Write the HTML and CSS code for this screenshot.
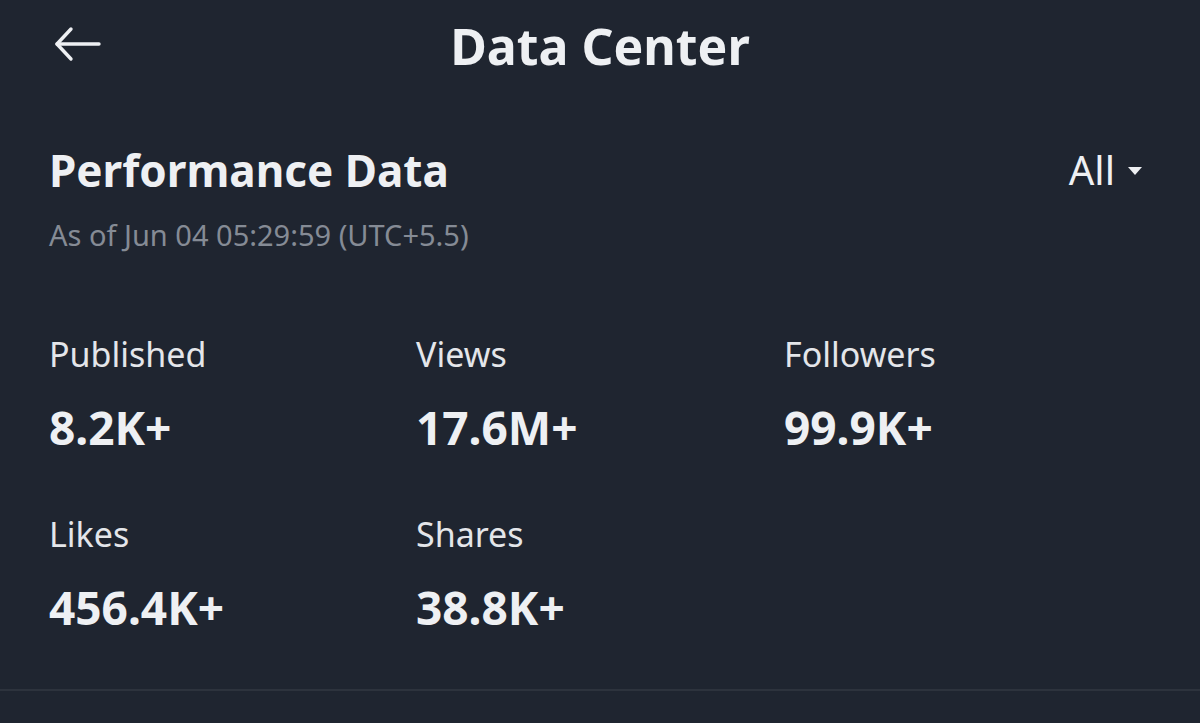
FILE: index.html
```html
<!DOCTYPE html>
<html lang="en">
<head>
<meta charset="utf-8">
<title>Data Center</title>
<link rel="stylesheet" href="styles.css">
</head>
<body>
<header class="topbar">
  <button class="back" aria-label="Back">
    <svg width="48" height="36" viewBox="0 0 48 36" fill="none" stroke="#eef0f3" stroke-width="3.4" stroke-linecap="round" stroke-linejoin="round">
      <path d="M45 18H3"/>
      <path d="M17 3L3 18L17 33"/>
    </svg>
  </button>
  <h1 class="title">Data Center</h1>
</header>
<section class="perf">
  <div class="perf-head">
    <div>
      <h2 class="perf-title">Performance Data</h2>
      <p class="asof">As of Jun 04 05:29:59 (UTC+5.5)</p>
    </div>
    <button class="filter">All<span class="caret"></span></button>
  </div>
  <div class="stats">
    <div class="stat"><div class="label">Published</div><div class="value">8.2K+</div></div>
    <div class="stat"><div class="label">Views</div><div class="value">17.6M+</div></div>
    <div class="stat"><div class="label">Followers</div><div class="value">99.9K+</div></div>
    <div class="stat"><div class="label">Likes</div><div class="value">456.4K+</div></div>
    <div class="stat"><div class="label">Shares</div><div class="value">38.8K+</div></div>
  </div>
</section>
<div class="divider"></div>
</body>
</html>
```
FILE: styles.css
```css
html, body {
  margin: 0;
  padding: 0;
  background: #1f2530;
  color: #eef0f3;
  font-family: "Noto Sans", "Open Sans", sans-serif;
  height: 723px;
  overflow: hidden;
}

.topbar {
  position: relative;
  height: 96px;
  display: flex;
  align-items: flex-start;
  justify-content: center;
}

.back {
  position: absolute;
  left: 54px;
  top: 26px;
  width: 48px;
  height: 36px;
  padding: 0;
  border: 0;
  background: none;
  display: block;
}

.back svg { display: block; }

.title {
  margin: 0;
  font-size: 50px;
  line-height: 92px;
  font-weight: 700;
  color: #eef0f3;
}

.perf {
  padding: 47px 49px 0 49px;
}

.perf-head {
  display: flex;
  justify-content: space-between;
  align-items: flex-start;
}

.perf-title {
  margin: 0;
  font-size: 44px;
  line-height: 54px;
  font-weight: 700;
  color: #eef0f3;
}

.asof {
  margin: 20px 0 0 0;
  font-size: 29px;
  line-height: 36px;
  color: #858b95;
}

.filter {
  margin: 0;
  padding: 0 9px 0 0;
  border: 0;
  background: none;
  color: #eef0f3;
  font-family: inherit;
  font-size: 40px;
  line-height: 54px;
  display: flex;
  align-items: center;
  gap: 13px;
}

.caret {
  width: 0;
  height: 0;
  border-left: 7px solid transparent;
  border-right: 7px solid transparent;
  border-top: 8px solid #eef0f3;
  margin-top: 2px;
}

.stats {
  margin-top: 80px;
  display: grid;
  grid-template-columns: 367px 368px 367px;
  row-gap: 58px;
}

.label {
  font-size: 34px;
  line-height: 42px;
  color: #e4e6ea;
  font-weight: 400;
}

.value {
  margin-top: 24px;
  font-size: 46px;
  line-height: 56px;
  font-weight: 700;
  color: #eef0f3;
}

.divider {
  margin-top: 54px;
  height: 2px;
  background: #2d333d;
}
```
